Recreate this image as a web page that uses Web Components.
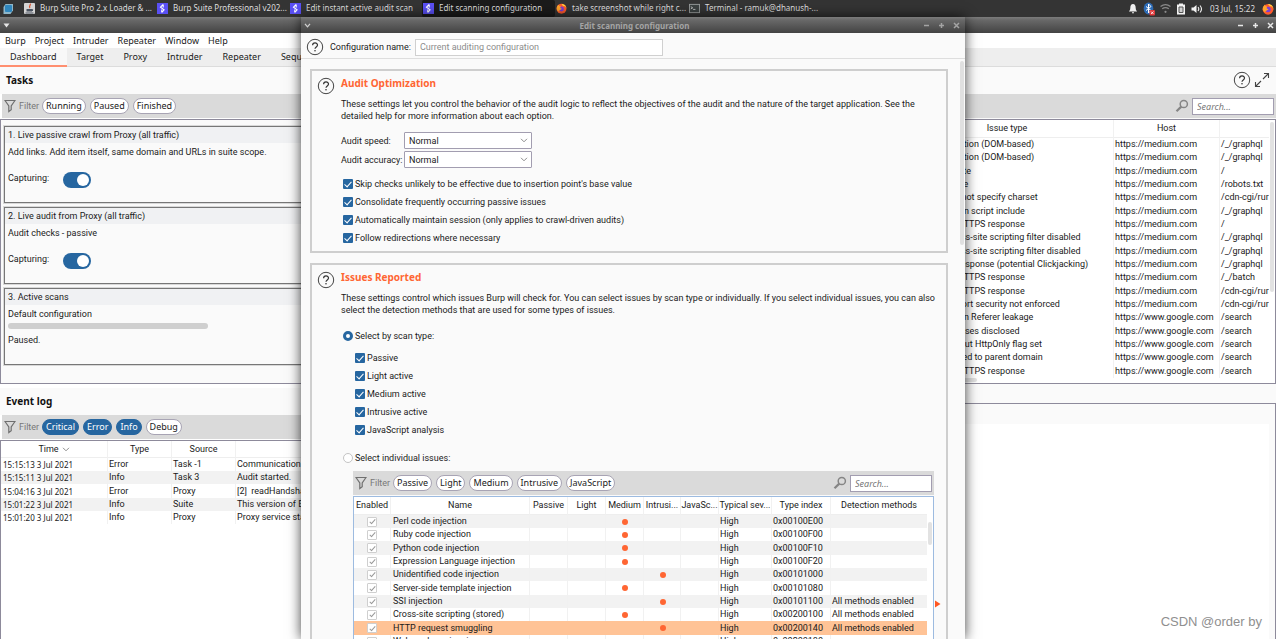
<!doctype html>
<html lang="en">
<head>
<meta charset="utf-8">
<title>Edit scanning configuration</title>
<style>
html, body { height: 100%; margin: 0; }
body { font-family: "Noto Sans", "Open Sans", sans-serif; font-size: 9px; line-height: 12px; color: #1a1a1a; overflow: hidden;
  --ui: Roboto, "Noto Sans", sans-serif; --label: "Noto Sans", sans-serif; }
</style>
</head>
<body>
<desk-top></desk-top>
<script>
const BASE = `
*, *::before, *::after { box-sizing: border-box; }
button, input, select { font: inherit; color: inherit; margin: 0; padding: 0; }
button { background: none; border: 0; white-space: nowrap; }
a { color: inherit; text-decoration: none; }
svg { display: block; flex: none; }
table { border-collapse: separate; border-spacing: 0; table-layout: fixed; width: 100%; }
th, td { padding: 0 0 0 2px; white-space: nowrap; overflow: hidden; text-align: left; height: 13px; line-height: 13px; }
tbody tr:nth-child(3n) td { height: 14px; }
th { font-weight: 400; text-align: center; padding: 0; height: 18px; border-bottom: 1px solid #eeeeee; }
th + th, td + td { border-left: 1px solid #f1f1f1; }
td + td { padding-left: 1px; }
`;
function define(name, css, html) {
  customElements.define(name, class extends HTMLElement {
    constructor() {
      super();
      const root = this.attachShadow({ mode: 'open' });
      root.innerHTML = '<style>' + BASE + css + '</style>' + (typeof html === 'function' ? html(this) : html);
    }
  });
}

/* ---------- icons ---------- */
const ICONS = {
  menu: ['0 0 12 12', '<path d="M1.500 4 3.500 1h7.500v6.500L8.500 11H1.500z" fill="#8fb6c8"/><rect x="3" y="2" width="7" height="7" rx="1" fill="#2f86bd"/>'],
  java: ['0 0 11 11', '<rect width="11" height="11" rx="1" fill="#d4d4d4"/><path d="M2.500 6h5.500v2.500h-5.500z" fill="#4a5360"/><path d="M8 6.500q2 0 0 1.600M1.500 10h8" stroke="#4a5360" fill="none"/><path d="M6 .800c1.500 1-1.800 2.200 0 4.200" stroke="#d8502c" stroke-width="1.200" fill="none"/>'],
  burp: ['0 0 11 11', '<rect width="11" height="11" fill="#5a50f5"/><path d="M6.200 1.500 3.500 4.200l3.600 2.600-2.300 2.700M6.200 1.500v3M4.800 6.500v3" stroke="#fff" stroke-width="1.100" fill="none"/>'],
  firefox: ['0 0 12 12', '<circle cx="6" cy="6.300" r="5.400" fill="#ff5a2c"/><path d="M6 1c3.500 0 5.500 2.500 5.400 5.500C11 3.500 9 3 8 3.500 7.500 2.500 6.500 2 6 1z" fill="#ffd23c"/><circle cx="6" cy="6.500" r="2.700" fill="#7a3fd6"/><path d="M.900 4.500C1.500 3 2.500 2 3 1.500c0 1.500 1 2 2.500 2.200C4 4.500 4.500 6 6.500 6 5.500 8 2.500 7.500 3.500 9.500 1 8.500.500 6.500.900 4.500z" fill="#ffa52c"/>'],
  term: ['0 0 12 11', '<rect x=".5" y="1" width="11" height="9" fill="#3c4242" stroke="#9a9d9d"/><path d="M2 3.500 4 4.800 2 6M4.500 6.500h2.500" stroke="#e8e8e8" stroke-width=".8" fill="none"/>'],
  bell: ['0 0 10 11', '<path d="M5 1C3 1 2.300 3 2.300 5S1.500 7.500.900 8.500h8.200C8.500 7.500 7.700 7 7.700 5S7 1 5 1zM4 9.300h2v.9H4z" fill="#eee"/>'],
  blue: ['0 0 12 14', '<ellipse cx="5.500" cy="6.500" rx="4.800" ry="6" fill="#2d6bb5"/><path d="M3 4.500 8 8.500 5.500 11V2L8 4.500 3 8.500" stroke="#fff" fill="none"/><rect x="6.500" y="8" width="5.500" height="5.500" rx="1" fill="#e0393b"/><path d="m8 9.500 2.500 2.500m0-2.500L8 12" stroke="#fff" stroke-width=".8"/>'],
  wifi: ['0 0 10 10', '<path d="M.500 3.200q4.500-3.400 9 0M2 5.300q3-2.200 6 0" stroke="#8a8a8a" stroke-width="1.200" fill="none"/><circle cx="5" cy="8" r="1" fill="#8a8a8a"/>'],
  batt: ['0 0 10 12', '<path d="M3 .500h4v1h2v10H1v-10h2z" fill="#f2f2f2"/><path d="M3 4h4v5.500H3z" fill="#d0d0d0" stroke="#555"/>'],
  vol: ['0 0 12 10', '<path d="M.500 3.500h2L5.500 1v8l-3-2.500h-2z" fill="#f2f2f2"/><path d="M7 3q1.600 2 0 4M9 1.500q3 3.500 0 7" stroke="#f2f2f2" stroke-width="1.100" fill="none"/>'],
  tri: ['0 0 7 5', '<path d="M.500.500h6L3.500 4.500z" fill="#e6e6e6"/>'],
  chevw: ['0 0 7 5', '<path d="m1 .800 2.500 3L6 .800" stroke="#d0d0d0" stroke-width="1.300" fill="none"/>'],
  chev: ['0 0 8 5', '<path d="m1 .800 3 3 3-3" stroke="#8d8d8d" fill="none"/>'],
  min: ['0 0 7 7', '<path d="M1 3.500h5" stroke="currentColor" stroke-width="1.500"/>'],
  max: ['0 0 7 7', '<path d="M1 3.500h5M3.500 1v5" stroke="currentColor" stroke-width="1.500"/>'],
  close: ['0 0 7 7', '<path d="m1 1 5 5M6 1 1 6" stroke="currentColor" stroke-width="1.500"/>'],
  help: ['0 0 18 18', '<circle cx="9" cy="9" r="7.700" fill="none" stroke="#444"/><path d="M6.600 7.200c0-3.100 4.900-3 4.900-.2 0 1.900-2.500 1.900-2.500 3.800" fill="none" stroke="#333" stroke-width="1.200"/><circle cx="9" cy="12.800" r=".8" fill="#333"/>'],
  expand: ['0 0 16 16', '<path d="M9 7l5-5M10 1.500h4.500V6M7 9l-5 5M1.500 10v4.500H6" fill="none" stroke="#444" stroke-width="1.100"/>'],
  funnel: ['0 0 12 14', '<path d="M1 1.500h10L7.200 7v3.800L4.800 12.500V7z" fill="none" stroke="#6f6f6f" stroke-width="1.200"/>'],
  lens: ['0 0 14 14', '<circle cx="8.800" cy="5" r="3.600" fill="none" stroke="#858585" stroke-width="1.500"/><path d="M6.300 7.600 1.500 12.300" stroke="#858585" stroke-width="2.200"/>'],
  arrow: ['0 0 6 8', '<path d="M0 .500 5.500 4 0 7.500z" fill="#ff5722"/>']
};
function icon(name, w, h) {
  const [box, body] = ICONS[name];
  return `<svg width="${w}" height="${h}" viewBox="${box}" aria-hidden="true">${body}</svg>`;
}

/* ---------- panel at the top of the desktop ---------- */
const APPS = [['java', 'Burp Suite Pro 2.x Loader &amp; ...'], ['burp', 'Burp Suite Professional v202...'], ['burp', 'Edit instant active audit scan'],
  ['burp', 'Edit scanning configuration'], ['firefox', 'take screenshot while right c...'], ['term', 'Terminal - ramuk@dhanush-...']];
define('task-panel', `
:host { display: flex; align-items: center; height: 17px; background: #343434; color: #dedede; font-size: 8px; padding-left: 2px; }
.apps { display: flex; margin-left: 9px; height: 17px; }
.apps button { display: flex; align-items: center; gap: 5px; width: 133px; padding: 0 1px 1px; }
.apps .on { background: #1b1b1b; border-radius: 2px; }
.tray { display: flex; align-items: center; gap: 5px; margin-left: auto; padding-right: 2px; }
time { font-size: 8px; margin: 0 2px; }
`, `${icon('menu', 12, 12)}<div class="apps">${APPS.map(([i, t]) => `<button class="${t.startsWith('Edit scan') ? 'on' : ''}">${icon(i, 11, 11)}<span>${t}</span></button>`).join('')}</div>
<div class="tray">${icon('bell', 10, 11)}${icon('blue', 12, 14)}${icon('wifi', 11, 11)}${icon('batt', 10, 12)}${icon('vol', 12, 10)}<time>03 Jul, 15:22</time>${icon('firefox', 12, 12)}</div>`);

/* ---------- window title bar ---------- */
define('title-bar', `
:host { display: grid; flex: none; grid-template-columns: 60px 1fr 60px; align-items: center; height: 16px; color: #e8e8e8; font-size: 8px; font-weight: 700;
  background: linear-gradient(#7c7c7c, #686868 20%, #434343); padding-left: 3px; }
:host([dim]) { color: #a4a4a4; }
.t { text-align: center; line-height: 12px; padding-top: 2px; }
.b { display: flex; justify-content: flex-end; gap: 4px; }
.b button { width: 11px; display: grid; place-items: center; }
:host([dim]) .b { padding-right: 3px; }
`, el => `<button aria-label="Window menu">${icon(el.hasAttribute('dim') ? 'chevw' : 'tri', 7, 5)}</button><span class="t"><slot></slot></span>
<span class="b"><button aria-label="Minimise">${icon('min', 7, 7)}</button><button aria-label="Maximise">${icon('max', 7, 7)}</button><button aria-label="Close">${icon('close', 7, 7)}</button></span>`);

/* ---------- filter bar ---------- */
define('filter-bar', `
:host { display: flex; align-items: center; gap: 4px; height: 24px; background: #dadada; padding: 0 2px; font-family: var(--label); }
.f { color: #777; margin-left: -1px; width: 19px; font-family: var(--ui); }
.pill { height: 16px; line-height: 14px; border: 1px solid #a8a4b4; border-radius: 8px; background: #fff; padding: 0 3px; }
.pill.on { background: #2666a0; color: #fff; border-color: #2666a0; }
.s { display: flex; align-items: center; gap: 3px; margin-left: auto; }
input { width: 82px; height: 17px; border: 1px solid #a29db0; background: #fff; padding: 0 4px; font-style: italic; outline: 0; }
input::placeholder { color: #777; opacity: 1; }
`, el => {
  const list = n => (el.getAttribute(n) || '').split(',').filter(Boolean);
  const on = list('on');
  return (el.hasAttribute('pills') ? `${icon('funnel', 12, 14)}<span class="f">Filter</span>` : '') +
    list('pills').map(p => `<button class="pill ${on.includes(p) ? 'on' : ''}" aria-pressed="${on.includes(p)}">${p}</button>`).join('') +
    (el.hasAttribute('search') ? `<label class="s">${icon('lens', 14, 14)}<input type="text" placeholder="Search..." aria-label="Search"></label>` : '');
});

/* ---------- task card ---------- */
define('task-card', `
:host { display: block; border: 1px solid #777; background: #fafafa; min-height: 77px; box-shadow: 0 0 0 1px #d8d8d8; font-family: var(--ui); }
h3 { margin: 0; font: inherit; background: #f0f1f3; line-height: 16px; padding-left: 3px; }
.body { padding: 3px 3px 0; }
p { margin: 0; }
label { display: flex; gap: 15px; margin-top: 14px; }
label span { width: 40px; }
input { appearance: none; width: 28px; height: 16px; border-radius: 8px; background: #2666a0; padding: 2px; }
input::before { content: ""; display: block; width: 12px; height: 12px; border-radius: 6px; background: #fff; margin-left: auto; }
.bar { height: 6px; width: 200px; background: #cfcfcf; border-radius: 3px; margin: 3px 0 5px; }
`, el => `<h3>${el.getAttribute('heading')}</h3><div class="body"><p><slot></slot></p>${el.hasAttribute('paused')
  ? '<div class="bar" role="progressbar" aria-label="Progress"></div><p>Paused.</p>'
  : '<label><span>Capturing:</span><input type="checkbox" role="switch" checked></label>'}</div>`);

/* ---------- event log ---------- */
const EVENTS = [['15:15:13 3 Jul 2021', 'Error', 'Task -1', 'Communication error'], ['15:15:11 3 Jul 2021', 'Info', 'Task 3', 'Audit started.'],
  ['15:04:16 3 Jul 2021', 'Error', 'Proxy', '[2]&nbsp; readHandshakeRecord'], ['15:01:22 3 Jul 2021', 'Info', 'Suite', 'This version of Burp Suite'],
  ['15:01:20 3 Jul 2021', 'Info', 'Proxy', 'Proxy service started']];
define('event-table', `
:host { display: block; flex: 1; background: #fff; border: 1px solid #8d8a9b; border-width: 1px 0 0 1px; font-family: var(--ui); }
tbody tr:nth-child(even) td { background: #f2f2f2; }
td:first-child { font-family: var(--label); font-size: 8px; }
th { height: 17px; }
th span { display: inline-flex; gap: 3px; align-items: center; }
`, `<table><colgroup><col style="width:106px"><col style="width:64px"><col style="width:64px"><col></colgroup>
<thead><tr><th><span>Time ${icon('chev', 8, 5)}</span></th><th>Type</th><th>Source</th><th></th></tr></thead>
<tbody>${EVENTS.map(r => '<tr>' + r.map(c => `<td>${c}</td>`).join('') + '</tr>').join('')}</tbody></table>`);

/* ---------- issue activity ---------- */
const M = 'https://medium.com', G = 'https://www.google.com';
const ISSUES = [['Open redirection (DOM-based)', M, '/_/graphql'], ['Open redirection (DOM-based)', M, '/_/graphql'], ['TLS certificate', M, '/'],
  ['Robots.txt file', M, '/robots.txt'], ['HTML does not specify charset', M, '/cdn-cgi/rur'], ['Cross-domain script include', M, '/_/graphql'],
  ['Cacheable HTTPS response', M, '/'], ['Browser cross-site scripting filter disabled', M, '/_/graphql'], ['Browser cross-site scripting filter disabled', M, '/_/graphql'],
  ['Frameable response (potential Clickjacking)', M, '/_/graphql'], ['Cacheable HTTPS response', M, '/_/batch'], ['Cacheable HTTPS response', M, '/cdn-cgi/rur'],
  ['Strict transport security not enforced', M, '/cdn-cgi/rur'], ['Cross-domain Referer leakage', G, '/search'], ['Email addresses disclosed', G, '/search'],
  ['Cookie without HttpOnly flag set', G, '/search'], ['Cookie scoped to parent domain', G, '/search'], ['Cacheable HTTPS response', G, '/search']];
define('issue-table', `
:host { display: grid; grid-template-columns: 1fr 6px; background: #fff; border: 1px solid #8d8a9b; border-left: 0; font-family: var(--ui); padding-bottom: 1px; }
.thumb { width: 4px; height: 170px; margin: 2px 1px; border-radius: 2px; background: #e2e2e2; }
.h { width: 76px; height: 4px; border-radius: 2px; background: #e2e2e2; }
td:first-child { padding-left: 12px; }
`, `<table><colgroup><col style="width:212px"><col style="width:106px"><col></colgroup>
<thead><tr><th>Issue type</th><th>Host</th><th></th></tr></thead>
<tbody>${ISSUES.map(r => '<tr>' + r.map(c => `<td>${c}</td>`).join('') + '</tr>').join('')}</tbody></table><div class="thumb"></div><div class="h"></div>`);

/* ---------- main window ---------- */
define('burp-window', `
:host { display: flex; flex-direction: column; flex: 1; min-height: 0; background: #fff; }
nav { display: flex; align-items: center; white-space: nowrap; }
.menu { height: 15px; padding-left: 5px; gap: 9px; background: #fff; }
.tabs { height: 19px; background: #eee; border-bottom: 1px solid #dcdcdc; }
.tabs a { height: 18px; line-height: 18px; padding: 0 10px; }
.tabs a.on { background: #f8f8f8; height: 19px; border-bottom: 2px solid #ff8f70; }
.panes { display: grid; grid-template-columns: minmax(0, 1fr) 375px; flex: 1; }
.pane { display: flex; flex-direction: column; min-width: 0; }
h2 { margin: 0; height: 27px; display: flex; align-items: center; padding: 0 6px 2px; font-size: 10px; font-weight: 700; background: #fafafa; color: #111; }
h2 span { display: flex; gap: 3px; align-items: center; margin-left: auto; }
filter-bar { margin: 0 0 1px 2px; }
.tasks { display: grid; gap: 4px; padding: 6px 0 18px 3px; border: 1px solid #8d8a9b; border-right: 0; background: #fafafa; }
.log { margin-top: 4px; }
.detail { margin-top: 19px; flex: 1; border: 1px solid #8d8a9b; border-width: 1px 1px 0 0; background: #fafafa; padding: 20px 6px 0 0; display: flex; }
.detail div { flex: 1; background: #fff; }
.right { background: #fafafa; }
`, `<title-bar></title-bar>
<nav class="menu">${['Burp', 'Project', 'Intruder', 'Repeater', 'Window', 'Help'].map(t => `<a href="#">${t}</a>`).join('')}</nav>
<nav class="tabs">${['Dashboard', 'Target', 'Proxy', 'Intruder', 'Repeater', 'Sequencer'].map((t, i) => `<a href="#" class="${i ? '' : 'on'}">${t}</a>`).join('')}</nav>
<div class="panes">
<section class="pane"><h2>Tasks</h2><filter-bar pills="Running,Paused,Finished"></filter-bar>
<div class="tasks"><task-card heading="1. Live passive crawl from Proxy (all traffic)">Add links. Add item itself, same domain and URLs in suite scope.</task-card>
<task-card heading="2. Live audit from Proxy (all traffic)">Audit checks - passive</task-card>
<task-card heading="3. Active scans" paused>Default configuration</task-card></div>
<h2 class="log">Event log</h2><filter-bar pills="Critical,Error,Info,Debug" on="Critical,Error,Info"></filter-bar><event-table></event-table></section>
<section class="pane right"><h2><span><button aria-label="Help">${icon('help', 18, 18)}</button><button aria-label="Expand">${icon('expand', 16, 16)}</button></span></h2>
<filter-bar search></filter-bar><issue-table></issue-table><div class="detail"><div></div></div></section>
</div>`);

/* ---------- form rows ---------- */
define('check-row', `
:host { display: block; height: 18px; }
label { display: flex; align-items: center; gap: 2px; height: 18px; }
input { appearance: none; width: 10px; height: 10px; margin-left: 2px; display: grid; place-items: center; }
[type=checkbox] { background: #2666a0; border-radius: 1px; }
[type=checkbox]::before { content: ""; width: 4px; height: 7px; margin-top: -2px; border: solid #fff; border-width: 0 1px 1px 0; transform: rotate(42deg); }
[type=radio] { border-radius: 5px; border: 1px solid #c4c4c4; background: #fff; }
[type=radio]:checked { border: 3px solid #2666a0; }
`, el => `<label><input type="${el.hasAttribute('radio') ? 'radio' : 'checkbox'}" name="o" ${el.hasAttribute('off') ? '' : 'checked'}><span><slot></slot></span></label>`);

define('select-row', `
:host { display: block; }
label { display: grid; grid-template-columns: 63px 128px; align-items: center; white-space: nowrap; }
.w { display: grid; align-items: center; }
select { appearance: none; grid-area: 1/1; width: 128px; height: 17px; border: 1px solid #a29db0; border-radius: 1px; background: #fff; padding-left: 4px; }
svg { grid-area: 1/1; justify-self: end; margin-right: 4px; }
`, el => `<label><span>${el.getAttribute('name')}</span><span class="w"><select><option>Normal</option></select>${icon('chev', 8, 5)}</span></label>`);

define('config-section', `
:host { display: block; border: 2px solid #cecece; position: relative; }
.g { display: grid; grid-template-columns: 18px minmax(0, 1fr); column-gap: 6px; padding: 6px 6px 4px 5px; }
.g > button { align-self: start; height: 18px; }
h2 { margin: 0; color: #ff6633; font-size: 10px; line-height: 13px; font-weight: 700; font-family: var(--label); }
`, el => `<div class="g"><button aria-label="Help">${icon('help', 18, 18)}</button><div><h2>${el.getAttribute('heading')}</h2><slot></slot></div></div>`);

/* ---------- issue types ---------- */
const TYPES = [['Perl code injection', 1, '0x00100E00', ''], ['Ruby code injection', 1, '0x00100F00', ''], ['Python code injection', 1, '0x00100F10', ''],
  ['Expression Language injection', 1, '0x00100F20', ''], ['Unidentified code injection', 2, '0x00101000', ''], ['Server-side template injection', 1, '0x00101080', ''],
  ['SSI injection', 2, '0x00101100', 'All methods enabled'], ['Cross-site scripting (stored)', 1, '0x00200100', 'All methods enabled'],
  ['HTTP request smuggling', 2, '0x00200140', 'All methods enabled'], ['Web cache poisoning', 2, '0x00200180', '']];
define('type-table', `
:host { display: grid; grid-template-columns: 1fr 6px; background: #fff; border: 1px solid #9dbbe0; border-bottom: 0; }
.thumb { width: 4px; height: 23px; margin: 25px 1px; border-radius: 2px; background: #e2e2e2; }
tbody tr:nth-child(odd) td { background: #f2f2f2; }
tbody tr.sel td { background: #ffc396; border-color: #ffc396; }
td:first-child { padding: 0; }
td:nth-child(2) { padding-left: 2px; }
td input { appearance: none; display: grid; place-items: center; width: 10px; height: 10px; margin: 0 auto; border: 1px solid #cfcfcf; border-radius: 1px; background: #fff; }
td input::before { content: ""; width: 3px; height: 6px; margin-top: -1px; border: solid #999; border-width: 0 1px 1px 0; transform: rotate(42deg); }
i { display: block; width: 6px; height: 6px; border-radius: 3px; background: #ff6633; margin: 0 auto; }
`, `<table><colgroup><col style="width:36px"><col style="width:139px"><col style="width:38px"><col style="width:38px"><col style="width:38px"><col style="width:37px"><col style="width:38px"><col style="width:53px"><col style="width:59px"><col></colgroup>
<thead><tr>${['Enabled', 'Name', 'Passive', 'Light', 'Medium', 'Intrusi...', 'JavaSc...', 'Typical sev...', 'Type index', 'Detection methods'].map(t => `<th>${t}</th>`).join('')}</tr></thead>
<tbody>${TYPES.map(([n, k, x, d], i) => `<tr class="${i === 8 ? 'sel' : ''}"><td><input type="checkbox" checked aria-label="${n}"></td><td>${n}</td><td></td><td></td><td>${k === 1 ? '<i></i>' : ''}</td><td>${k === 2 ? '<i></i>' : ''}</td><td></td><td>High</td><td>${x}</td><td>${d}</td></tr>`).join('')}</tbody></table><div class="thumb"></div>`);

/* ---------- dialog ---------- */
define('config-dialog', `
:host { display: flex; flex-direction: column; background: #fafafa; font-family: var(--ui); overflow: hidden; box-shadow: 0 0 12px rgba(0,0,0,.75); }
title-bar { font-family: var(--label); }
.name { display: flex; align-items: center; height: 26px; border-bottom: 1px solid #dedede; padding: 3px 5px 0; gap: 6px; white-space: nowrap; flex: none; }
.name label { display: flex; align-items: center; gap: 4px; }
.name input { width: 248px; height: 17px; border: 1px solid #d0d0d0; background: #fff; color: #8c8c8c; padding: 0 4px; }
.scroll { display: grid; grid-template-columns: minmax(0, 1fr) 4px; gap: 12px; padding: 0 1px 0 9px; }
.stack { display: grid; gap: 10px; padding-top: 10px; }
.thumb { height: 184px; margin-top: 2px; border-radius: 2px; background: #e0e0e0; }
p { margin: 8px 0 10px; }
.sel { display: grid; gap: 2px; margin-bottom: 7px; }
.issues p { margin-bottom: 11px; }
.types { padding-left: 12px; margin: 4px 0 10px; }
.list { margin: 4px 6px 0 12px; }
filter-bar { margin-bottom: 1px; }
.go { position: absolute; right: 5px; top: 335px; }
`, `<title-bar dim>Edit scanning configuration</title-bar>
<div class="name"><button aria-label="Help">${icon('help', 18, 18)}</button><label><span>Configuration name:</span><input type="text" value="Current auditing configuration"></label></div>
<div class="scroll"><div class="stack">
<config-section heading="Audit Optimization">
<p>These settings let you control the behavior of the audit logic to reflect the objectives of the audit and the nature of the target application. See the detailed help for more information about each option.</p>
<div class="sel"><select-row name="Audit speed:"></select-row><select-row name="Audit accuracy:"></select-row></div>
<check-row>Skip checks unlikely to be effective due to insertion point's base value</check-row><check-row>Consolidate frequently occurring passive issues</check-row><check-row>Automatically maintain session (only applies to crawl-driven audits)</check-row><check-row>Follow redirections where necessary</check-row>
</config-section>
<config-section class="issues" heading="Issues Reported">
<p>These settings control which issues Burp will check for. You can select issues by scan type or individually. If you select individual issues, you can also select the detection methods that are used for some types of issues.</p>
<check-row radio>Select by scan type:</check-row>
<div class="types"><check-row>Passive</check-row><check-row>Light active</check-row><check-row>Medium active</check-row><check-row>Intrusive active</check-row><check-row>JavaScript analysis</check-row></div>
<check-row radio off>Select individual issues:</check-row>
<div class="list"><filter-bar pills="Passive,Light,Medium,Intrusive,JavaScript" search></filter-bar><type-table></type-table></div>
<span class="go">${icon('arrow', 6, 8)}</span>
</config-section>
</div><div class="thumb"></div></div>`);

define('desk-top', `
:host { display: flex; flex-direction: column; height: 100%; position: relative; overflow: hidden; }
config-dialog { position: absolute; left: 301px; right: 311px; top: 17px; bottom: 0; }
.mark { position: absolute; right: 14px; bottom: 8px; font: 13px/18px "Liberation Sans", sans-serif; color: #8f8f8f; }
`, `<task-panel></task-panel><burp-window></burp-window><config-dialog></config-dialog><span class="mark">CSDN @order by</span>`);
</script>
</body>
</html>
